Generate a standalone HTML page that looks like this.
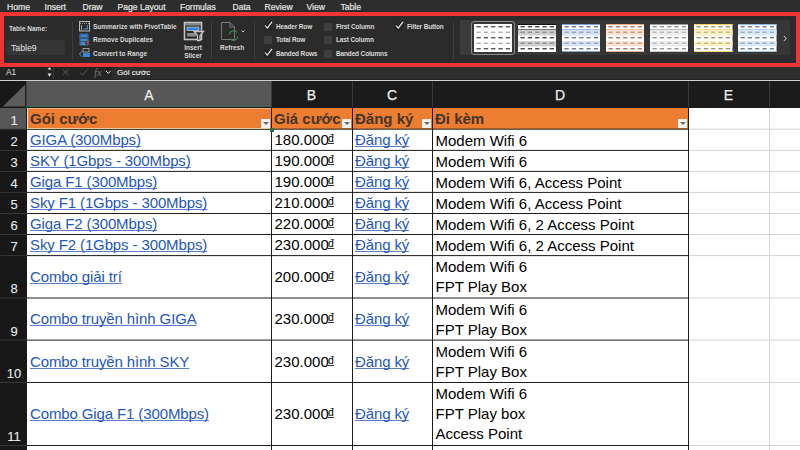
<!DOCTYPE html><html><head><meta charset="utf-8"><style>
*{margin:0;padding:0;box-sizing:border-box}
html,body{width:800px;height:450px;overflow:hidden;background:#fff;font-family:"Liberation Sans",sans-serif}
.ab{position:absolute}
.mt{position:absolute;top:1.8px;font-size:8.6px;line-height:10px;color:#e4e4e4;font-weight:normal;-webkit-text-stroke:0.2px #e4e4e4}
.rt{position:absolute;font-size:6.5px;color:#d8d8d8;font-weight:bold;white-space:nowrap;line-height:8px}
.cb{position:absolute;width:7.5px;height:7.5px;border-radius:1.5px;background:#3e3e3e}
.ck{position:absolute;font-size:10px;color:#f0f0f0;line-height:10px}
.th{position:absolute;width:39px;height:28px;background:#fff}
.cell{position:absolute;font-size:15px;white-space:nowrap;color:#000;line-height:17px}
.lk{letter-spacing:-0.12px;color:#2457b8;text-decoration:underline;text-decoration-thickness:1px;text-underline-offset:1px;text-decoration-skip-ink:none;text-decoration-color:#5a7ec4}
.hd{position:absolute;font-size:15px;font-weight:bold;color:#45342a;white-space:nowrap;line-height:17px}
.fb{position:absolute;width:9px;height:9px;background:#f2f2f2}
.fb:after{content:"";position:absolute;left:1.5px;top:3px;border-left:3px solid transparent;border-right:3px solid transparent;border-top:3.5px solid #6a6a6a}
.rh{position:absolute;left:0.5px;width:27px;font-size:13px;color:#ececec;text-align:center;line-height:13px;-webkit-text-stroke:0.08px #ececec}
.ch{position:absolute;top:82px;height:26px;font-size:14px;color:#ececec;text-align:center;line-height:27px;-webkit-text-stroke:0.25px #ececec}
</style></head><body>

<div class="ab" style="left:0;top:0;width:800px;height:12px;background:#2d2d2d"></div>
<div class="mt" style="left:7px">Home</div>
<div class="mt" style="left:44.5px">Insert</div>
<div class="mt" style="left:82.5px">Draw</div>
<div class="mt" style="left:117.5px">Page Layout</div>
<div class="mt" style="left:180px">Formulas</div>
<div class="mt" style="left:232.5px">Data</div>
<div class="mt" style="left:264.5px">Review</div>
<div class="mt" style="left:306.5px">View</div>
<div class="mt" style="left:340.5px">Table</div>
<div class="ab" style="left:0;top:12px;width:800px;height:55px;background:#f23434"></div>
<div class="ab" style="left:4px;top:16px;width:792px;height:46.6px;background:#2b2b2b"></div>
<div class="rt" style="left:9px;top:25px">Table Name:</div>
<div class="ab" style="left:6px;top:40px;width:59px;height:15px;background:#353535;border-radius:3px"></div>
<div class="rt" style="left:11px;top:43.5px;font-weight:normal;font-size:8.7px;color:#e6e6e6">Table9</div>
<div class="ab" style="left:72px;top:22px;width:1px;height:38px;background:#3d3d3d"></div>
<svg class="ab" style="left:78px;top:20px" width="13" height="40" viewBox="0 0 13 40"><rect x="1.5" y="1.5" width="10" height="9.5" fill="none" stroke="#b8b8b8" stroke-width="1"/><line x1="2" y1="3.5" x2="11" y2="3.5" stroke="#9a9a9a" stroke-width="1" stroke-dasharray="1,1"/><line x1="3.5" y1="5" x2="3.5" y2="10.5" stroke="#9a9a9a" stroke-width="1"/><path d="M5.5 9 H9.5 V5" fill="none" stroke="#4a90e2" stroke-width="1"/><rect x="2.5" y="14.5" width="7" height="3" fill="#3a84d8"/><rect x="2.5" y="18.5" width="7" height="3" fill="#3a84d8"/><rect x="2.5" y="22" width="5" height="3" fill="#3a84d8"/><rect x="2" y="14" width="8" height="11" fill="none" stroke="#5a9ae0" stroke-width="0.6"/><path d="M8 20.5 L11.5 24.5 M11.5 20.5 L8 24.5" stroke="#d9443a" stroke-width="0.9"/><rect x="5" y="28.5" width="6" height="3.5" fill="none" stroke="#a8a8a8" stroke-width="0.9"/><rect x="5" y="33" width="7" height="4" fill="#3a84d8"/><path d="M4 31 L1.5 34 L4 37" fill="none" stroke="#4a90e2" stroke-width="1"/></svg>
<div class="rt" style="left:93px;top:22.6px">Summarize with PivotTable</div>
<div class="rt" style="left:93px;top:36px">Remove Duplicates</div>
<div class="rt" style="left:93px;top:50px">Convert to Range</div>
<svg class="ab" style="left:183px;top:21px" width="22" height="21" viewBox="0 0 22 21"><rect x="1.5" y="1.5" width="17" height="17" fill="#2a2a2a" stroke="#c4c4c4" stroke-width="1.6"/><rect x="2" y="2" width="16" height="2.5" fill="#8a8a8a"/><rect x="4" y="6" width="12" height="3.5" fill="#3a84d8" stroke="#d8e6f5" stroke-width="0.6"/><rect x="4" y="12" width="9" height="3.5" fill="#8a8a8a"/><path d="M11 10.5 H20.5 L17 14.5 V19.5 H14.5 V14.5 Z" fill="#2a2a2a" stroke="#c4c4c4" stroke-width="1.3"/></svg>
<div class="rt" style="left:183px;top:44px;text-align:center;width:20px">Insert</div>
<div class="rt" style="left:182px;top:51.5px;text-align:center;width:22px">Slicer</div>
<div class="ab" style="left:211px;top:22px;width:1px;height:38px;background:#3d3d3d"></div>
<svg class="ab" style="left:220px;top:21px" width="28" height="22" viewBox="0 0 28 22"><path d="M1.5 1.5 H10 L14.5 6 V18.5 H1.5 Z" fill="none" stroke="#7a7a7a" stroke-width="1"/><path d="M10 1.5 V6 H14.5" fill="none" stroke="#7a7a7a" stroke-width="1"/><path d="M9.3 13.5 A4.3 4.3 0 0 1 17 11.5 M17.8 15.5 A4.3 4.3 0 0 1 10 17.5" fill="none" stroke="#428a4e" stroke-width="1.1"/><path d="M21.5 9.5 L23 11 L24.5 9.5" fill="none" stroke="#e0e0e0" stroke-width="0.9"/></svg>
<div class="rt" style="left:220px;top:44px">Refresh</div>
<div class="ab" style="left:254px;top:22px;width:1px;height:38px;background:#3d3d3d"></div>
<div class="cb" style="left:264px;top:23px;background:#252525"></div>
<svg class="ab" style="left:264px;top:21px" width="9" height="9" viewBox="0 0 9 9"><path d="M1 4.5 L3.3 7.2 L8 0.8" fill="none" stroke="#f2f2f2" stroke-width="1.1"/></svg>
<div class="rt" style="left:276px;top:23px;letter-spacing:-0.15px">Header Row</div>
<div class="cb" style="left:264px;top:36px"></div>
<div class="rt" style="left:276px;top:36px;letter-spacing:-0.15px">Total Row</div>
<div class="cb" style="left:264px;top:50px;background:#252525"></div>
<svg class="ab" style="left:264px;top:48px" width="9" height="9" viewBox="0 0 9 9"><path d="M1 4.5 L3.3 7.2 L8 0.8" fill="none" stroke="#f2f2f2" stroke-width="1.1"/></svg>
<div class="rt" style="left:276px;top:50px;letter-spacing:-0.15px">Banded Rows</div>
<div class="cb" style="left:324px;top:23px"></div>
<div class="rt" style="left:336px;top:23px;letter-spacing:-0.15px">First Column</div>
<div class="cb" style="left:324px;top:36px"></div>
<div class="rt" style="left:336px;top:36px;letter-spacing:-0.15px">Last Column</div>
<div class="cb" style="left:324px;top:50px"></div>
<div class="rt" style="left:336px;top:50px;letter-spacing:-0.15px">Banded Columns</div>
<div class="cb" style="left:395px;top:23px;background:#252525"></div>
<svg class="ab" style="left:395px;top:21px" width="9" height="9" viewBox="0 0 9 9"><path d="M1 4.5 L3.3 7.2 L8 0.8" fill="none" stroke="#f2f2f2" stroke-width="1.1"/></svg>
<div class="rt" style="left:407px;top:23px;letter-spacing:-0.15px">Filter Button</div>
<div class="ab" style="left:453px;top:22px;width:1px;height:38px;background:#3d3d3d"></div>
<div class="ab" style="left:460px;top:20px;width:330px;height:35px;background:#363636;border-radius:2px"></div>
<div class="ab" style="left:460px;top:20px;width:11px;height:35px;background:#3b3b3b;border-radius:2px 0 0 2px"></div>
<div class="ab" style="left:471px;top:21px;width:44px;height:34px;border:1.5px solid #8c8c8c;border-radius:3px"></div>
<svg class="ab" style="left:473.5px;top:23.5px" width="38.5" height="28" viewBox="0 0 38.5 28"><rect x="0" y="0" width="38.5" height="28" fill="#fff"/><rect x="2.5" y="2.1" width="4.3" height="1.3" fill="#4a4a4a"/><rect x="9.8" y="2.1" width="4.3" height="1.3" fill="#4a4a4a"/><rect x="17.1" y="2.1" width="4.3" height="1.3" fill="#4a4a4a"/><rect x="24.4" y="2.1" width="4.3" height="1.3" fill="#4a4a4a"/><rect x="31.7" y="2.1" width="4.3" height="1.3" fill="#4a4a4a"/><rect x="2.5" y="7.6" width="4.3" height="1.3" fill="#a8a8a8"/><rect x="9.8" y="7.6" width="4.3" height="1.3" fill="#a8a8a8"/><rect x="17.1" y="7.6" width="4.3" height="1.3" fill="#a8a8a8"/><rect x="24.4" y="7.6" width="4.3" height="1.3" fill="#a8a8a8"/><rect x="31.7" y="7.6" width="4.3" height="1.3" fill="#a8a8a8"/><rect x="2.5" y="13.1" width="4.3" height="1.3" fill="#4a4a4a"/><rect x="9.8" y="13.1" width="4.3" height="1.3" fill="#4a4a4a"/><rect x="17.1" y="13.1" width="4.3" height="1.3" fill="#4a4a4a"/><rect x="24.4" y="13.1" width="4.3" height="1.3" fill="#4a4a4a"/><rect x="31.7" y="13.1" width="4.3" height="1.3" fill="#4a4a4a"/><rect x="2.5" y="18.6" width="4.3" height="1.3" fill="#a8a8a8"/><rect x="9.8" y="18.6" width="4.3" height="1.3" fill="#a8a8a8"/><rect x="17.1" y="18.6" width="4.3" height="1.3" fill="#a8a8a8"/><rect x="24.4" y="18.6" width="4.3" height="1.3" fill="#a8a8a8"/><rect x="31.7" y="18.6" width="4.3" height="1.3" fill="#a8a8a8"/><rect x="2.5" y="24.1" width="4.3" height="1.3" fill="#4a4a4a"/><rect x="9.8" y="24.1" width="4.3" height="1.3" fill="#4a4a4a"/><rect x="17.1" y="24.1" width="4.3" height="1.3" fill="#4a4a4a"/><rect x="24.4" y="24.1" width="4.3" height="1.3" fill="#4a4a4a"/><rect x="31.7" y="24.1" width="4.3" height="1.3" fill="#4a4a4a"/></svg>
<svg class="ab" style="left:517.6px;top:23.5px" width="38.5" height="28" viewBox="0 0 38.5 28"><rect x="0" y="0" width="38.5" height="28" fill="#fff"/><rect x="0" y="0" width="38.5" height="1" fill="#111"/><rect x="0" y="5.3" width="38.5" height="0.8" fill="#333"/><rect x="0" y="6" width="38.5" height="5.5" fill="#cfcfcf"/><rect x="0" y="17" width="38.5" height="5.5" fill="#cfcfcf"/><rect x="0" y="27" width="38.5" height="1" fill="#fff"/><rect x="2.5" y="2.1" width="4.3" height="1.3" fill="#3a3a3a"/><rect x="9.8" y="2.1" width="4.3" height="1.3" fill="#3a3a3a"/><rect x="17.1" y="2.1" width="4.3" height="1.3" fill="#3a3a3a"/><rect x="24.4" y="2.1" width="4.3" height="1.3" fill="#3a3a3a"/><rect x="31.7" y="2.1" width="4.3" height="1.3" fill="#3a3a3a"/><rect x="2.5" y="7.6" width="4.3" height="1.3" fill="#8a8a8a"/><rect x="9.8" y="7.6" width="4.3" height="1.3" fill="#8a8a8a"/><rect x="17.1" y="7.6" width="4.3" height="1.3" fill="#8a8a8a"/><rect x="24.4" y="7.6" width="4.3" height="1.3" fill="#8a8a8a"/><rect x="31.7" y="7.6" width="4.3" height="1.3" fill="#8a8a8a"/><rect x="2.5" y="13.1" width="4.3" height="1.3" fill="#3a3a3a"/><rect x="9.8" y="13.1" width="4.3" height="1.3" fill="#3a3a3a"/><rect x="17.1" y="13.1" width="4.3" height="1.3" fill="#3a3a3a"/><rect x="24.4" y="13.1" width="4.3" height="1.3" fill="#3a3a3a"/><rect x="31.7" y="13.1" width="4.3" height="1.3" fill="#3a3a3a"/><rect x="2.5" y="18.6" width="4.3" height="1.3" fill="#8a8a8a"/><rect x="9.8" y="18.6" width="4.3" height="1.3" fill="#8a8a8a"/><rect x="17.1" y="18.6" width="4.3" height="1.3" fill="#8a8a8a"/><rect x="24.4" y="18.6" width="4.3" height="1.3" fill="#8a8a8a"/><rect x="31.7" y="18.6" width="4.3" height="1.3" fill="#8a8a8a"/><rect x="2.5" y="24.1" width="4.3" height="1.3" fill="#3a3a3a"/><rect x="9.8" y="24.1" width="4.3" height="1.3" fill="#3a3a3a"/><rect x="17.1" y="24.1" width="4.3" height="1.3" fill="#3a3a3a"/><rect x="24.4" y="24.1" width="4.3" height="1.3" fill="#3a3a3a"/><rect x="31.7" y="24.1" width="4.3" height="1.3" fill="#3a3a3a"/></svg>
<svg class="ab" style="left:561.7px;top:23.5px" width="38.5" height="28" viewBox="0 0 38.5 28"><rect x="0" y="0" width="38.5" height="28" fill="#fff"/><rect x="0" y="0" width="38.5" height="1" fill="#7d9fd6"/><rect x="0" y="5.3" width="38.5" height="0.8" fill="#7d9fd6"/><rect x="0" y="6" width="38.5" height="5.5" fill="#d9e2f3"/><rect x="0" y="17" width="38.5" height="5.5" fill="#d9e2f3"/><rect x="0" y="27" width="38.5" height="1" fill="#8aa4d0"/><rect x="2.5" y="2.1" width="4.3" height="1.3" fill="#5b6f8c"/><rect x="9.8" y="2.1" width="4.3" height="1.3" fill="#5b6f8c"/><rect x="17.1" y="2.1" width="4.3" height="1.3" fill="#5b6f8c"/><rect x="24.4" y="2.1" width="4.3" height="1.3" fill="#5b6f8c"/><rect x="31.7" y="2.1" width="4.3" height="1.3" fill="#5b6f8c"/><rect x="2.5" y="7.6" width="4.3" height="1.3" fill="#8ea0bd"/><rect x="9.8" y="7.6" width="4.3" height="1.3" fill="#8ea0bd"/><rect x="17.1" y="7.6" width="4.3" height="1.3" fill="#8ea0bd"/><rect x="24.4" y="7.6" width="4.3" height="1.3" fill="#8ea0bd"/><rect x="31.7" y="7.6" width="4.3" height="1.3" fill="#8ea0bd"/><rect x="2.5" y="13.1" width="4.3" height="1.3" fill="#5b6f8c"/><rect x="9.8" y="13.1" width="4.3" height="1.3" fill="#5b6f8c"/><rect x="17.1" y="13.1" width="4.3" height="1.3" fill="#5b6f8c"/><rect x="24.4" y="13.1" width="4.3" height="1.3" fill="#5b6f8c"/><rect x="31.7" y="13.1" width="4.3" height="1.3" fill="#5b6f8c"/><rect x="2.5" y="18.6" width="4.3" height="1.3" fill="#8ea0bd"/><rect x="9.8" y="18.6" width="4.3" height="1.3" fill="#8ea0bd"/><rect x="17.1" y="18.6" width="4.3" height="1.3" fill="#8ea0bd"/><rect x="24.4" y="18.6" width="4.3" height="1.3" fill="#8ea0bd"/><rect x="31.7" y="18.6" width="4.3" height="1.3" fill="#8ea0bd"/><rect x="2.5" y="24.1" width="4.3" height="1.3" fill="#5b6f8c"/><rect x="9.8" y="24.1" width="4.3" height="1.3" fill="#5b6f8c"/><rect x="17.1" y="24.1" width="4.3" height="1.3" fill="#5b6f8c"/><rect x="24.4" y="24.1" width="4.3" height="1.3" fill="#5b6f8c"/><rect x="31.7" y="24.1" width="4.3" height="1.3" fill="#5b6f8c"/></svg>
<svg class="ab" style="left:605.8px;top:23.5px" width="38.5" height="28" viewBox="0 0 38.5 28"><rect x="0" y="0" width="38.5" height="28" fill="#fff"/><rect x="0" y="0" width="38.5" height="1" fill="#f3a978"/><rect x="0" y="5.3" width="38.5" height="0.8" fill="#f3a978"/><rect x="0" y="6" width="38.5" height="5.5" fill="#fbe2d3"/><rect x="0" y="17" width="38.5" height="5.5" fill="#fbe2d3"/><rect x="0" y="27" width="38.5" height="1" fill="#f3b48c"/><rect x="2.5" y="2.1" width="4.3" height="1.3" fill="#9a7058"/><rect x="9.8" y="2.1" width="4.3" height="1.3" fill="#9a7058"/><rect x="17.1" y="2.1" width="4.3" height="1.3" fill="#9a7058"/><rect x="24.4" y="2.1" width="4.3" height="1.3" fill="#9a7058"/><rect x="31.7" y="2.1" width="4.3" height="1.3" fill="#9a7058"/><rect x="2.5" y="7.6" width="4.3" height="1.3" fill="#c4967a"/><rect x="9.8" y="7.6" width="4.3" height="1.3" fill="#c4967a"/><rect x="17.1" y="7.6" width="4.3" height="1.3" fill="#c4967a"/><rect x="24.4" y="7.6" width="4.3" height="1.3" fill="#c4967a"/><rect x="31.7" y="7.6" width="4.3" height="1.3" fill="#c4967a"/><rect x="2.5" y="13.1" width="4.3" height="1.3" fill="#9a7058"/><rect x="9.8" y="13.1" width="4.3" height="1.3" fill="#9a7058"/><rect x="17.1" y="13.1" width="4.3" height="1.3" fill="#9a7058"/><rect x="24.4" y="13.1" width="4.3" height="1.3" fill="#9a7058"/><rect x="31.7" y="13.1" width="4.3" height="1.3" fill="#9a7058"/><rect x="2.5" y="18.6" width="4.3" height="1.3" fill="#c4967a"/><rect x="9.8" y="18.6" width="4.3" height="1.3" fill="#c4967a"/><rect x="17.1" y="18.6" width="4.3" height="1.3" fill="#c4967a"/><rect x="24.4" y="18.6" width="4.3" height="1.3" fill="#c4967a"/><rect x="31.7" y="18.6" width="4.3" height="1.3" fill="#c4967a"/><rect x="2.5" y="24.1" width="4.3" height="1.3" fill="#9a7058"/><rect x="9.8" y="24.1" width="4.3" height="1.3" fill="#9a7058"/><rect x="17.1" y="24.1" width="4.3" height="1.3" fill="#9a7058"/><rect x="24.4" y="24.1" width="4.3" height="1.3" fill="#9a7058"/><rect x="31.7" y="24.1" width="4.3" height="1.3" fill="#9a7058"/></svg>
<svg class="ab" style="left:649.9px;top:23.5px" width="38.5" height="28" viewBox="0 0 38.5 28"><rect x="0" y="0" width="38.5" height="28" fill="#fff"/><rect x="0" y="0" width="38.5" height="1" fill="#9a9a9a"/><rect x="0" y="5.3" width="38.5" height="0.8" fill="#9a9a9a"/><rect x="0" y="6" width="38.5" height="5.5" fill="#ececec"/><rect x="0" y="17" width="38.5" height="5.5" fill="#ececec"/><rect x="0" y="27" width="38.5" height="1" fill="#c8c8c8"/><rect x="2.5" y="2.1" width="4.3" height="1.3" fill="#8a8a8a"/><rect x="9.8" y="2.1" width="4.3" height="1.3" fill="#8a8a8a"/><rect x="17.1" y="2.1" width="4.3" height="1.3" fill="#8a8a8a"/><rect x="24.4" y="2.1" width="4.3" height="1.3" fill="#8a8a8a"/><rect x="31.7" y="2.1" width="4.3" height="1.3" fill="#8a8a8a"/><rect x="2.5" y="7.6" width="4.3" height="1.3" fill="#b5b5b5"/><rect x="9.8" y="7.6" width="4.3" height="1.3" fill="#b5b5b5"/><rect x="17.1" y="7.6" width="4.3" height="1.3" fill="#b5b5b5"/><rect x="24.4" y="7.6" width="4.3" height="1.3" fill="#b5b5b5"/><rect x="31.7" y="7.6" width="4.3" height="1.3" fill="#b5b5b5"/><rect x="2.5" y="13.1" width="4.3" height="1.3" fill="#8a8a8a"/><rect x="9.8" y="13.1" width="4.3" height="1.3" fill="#8a8a8a"/><rect x="17.1" y="13.1" width="4.3" height="1.3" fill="#8a8a8a"/><rect x="24.4" y="13.1" width="4.3" height="1.3" fill="#8a8a8a"/><rect x="31.7" y="13.1" width="4.3" height="1.3" fill="#8a8a8a"/><rect x="2.5" y="18.6" width="4.3" height="1.3" fill="#b5b5b5"/><rect x="9.8" y="18.6" width="4.3" height="1.3" fill="#b5b5b5"/><rect x="17.1" y="18.6" width="4.3" height="1.3" fill="#b5b5b5"/><rect x="24.4" y="18.6" width="4.3" height="1.3" fill="#b5b5b5"/><rect x="31.7" y="18.6" width="4.3" height="1.3" fill="#b5b5b5"/><rect x="2.5" y="24.1" width="4.3" height="1.3" fill="#8a8a8a"/><rect x="9.8" y="24.1" width="4.3" height="1.3" fill="#8a8a8a"/><rect x="17.1" y="24.1" width="4.3" height="1.3" fill="#8a8a8a"/><rect x="24.4" y="24.1" width="4.3" height="1.3" fill="#8a8a8a"/><rect x="31.7" y="24.1" width="4.3" height="1.3" fill="#8a8a8a"/></svg>
<svg class="ab" style="left:694.0px;top:23.5px" width="38.5" height="28" viewBox="0 0 38.5 28"><rect x="0" y="0" width="38.5" height="28" fill="#fff"/><rect x="0" y="0" width="38.5" height="1" fill="#f5cd5e"/><rect x="0" y="5.3" width="38.5" height="0.8" fill="#f5cd5e"/><rect x="0" y="6" width="38.5" height="5.5" fill="#fff1c8"/><rect x="0" y="17" width="38.5" height="5.5" fill="#fff1c8"/><rect x="0" y="27" width="38.5" height="1" fill="#f5d67a"/><rect x="2.5" y="2.1" width="4.3" height="1.3" fill="#a08a5a"/><rect x="9.8" y="2.1" width="4.3" height="1.3" fill="#a08a5a"/><rect x="17.1" y="2.1" width="4.3" height="1.3" fill="#a08a5a"/><rect x="24.4" y="2.1" width="4.3" height="1.3" fill="#a08a5a"/><rect x="31.7" y="2.1" width="4.3" height="1.3" fill="#a08a5a"/><rect x="2.5" y="7.6" width="4.3" height="1.3" fill="#c8b27a"/><rect x="9.8" y="7.6" width="4.3" height="1.3" fill="#c8b27a"/><rect x="17.1" y="7.6" width="4.3" height="1.3" fill="#c8b27a"/><rect x="24.4" y="7.6" width="4.3" height="1.3" fill="#c8b27a"/><rect x="31.7" y="7.6" width="4.3" height="1.3" fill="#c8b27a"/><rect x="2.5" y="13.1" width="4.3" height="1.3" fill="#a08a5a"/><rect x="9.8" y="13.1" width="4.3" height="1.3" fill="#a08a5a"/><rect x="17.1" y="13.1" width="4.3" height="1.3" fill="#a08a5a"/><rect x="24.4" y="13.1" width="4.3" height="1.3" fill="#a08a5a"/><rect x="31.7" y="13.1" width="4.3" height="1.3" fill="#a08a5a"/><rect x="2.5" y="18.6" width="4.3" height="1.3" fill="#c8b27a"/><rect x="9.8" y="18.6" width="4.3" height="1.3" fill="#c8b27a"/><rect x="17.1" y="18.6" width="4.3" height="1.3" fill="#c8b27a"/><rect x="24.4" y="18.6" width="4.3" height="1.3" fill="#c8b27a"/><rect x="31.7" y="18.6" width="4.3" height="1.3" fill="#c8b27a"/><rect x="2.5" y="24.1" width="4.3" height="1.3" fill="#a08a5a"/><rect x="9.8" y="24.1" width="4.3" height="1.3" fill="#a08a5a"/><rect x="17.1" y="24.1" width="4.3" height="1.3" fill="#a08a5a"/><rect x="24.4" y="24.1" width="4.3" height="1.3" fill="#a08a5a"/><rect x="31.7" y="24.1" width="4.3" height="1.3" fill="#a08a5a"/></svg>
<svg class="ab" style="left:738.1px;top:23.5px" width="38.5" height="28" viewBox="0 0 38.5 28"><rect x="0" y="0" width="38.5" height="28" fill="#fff"/><rect x="0" y="0" width="38.5" height="1" fill="#8fb8e0"/><rect x="0" y="5.3" width="38.5" height="0.8" fill="#8fb8e0"/><rect x="0" y="6" width="38.5" height="5.5" fill="#dbe9f6"/><rect x="0" y="17" width="38.5" height="5.5" fill="#dbe9f6"/><rect x="0" y="27" width="38.5" height="1" fill="#a5c5e5"/><rect x="2.5" y="2.1" width="4.3" height="1.3" fill="#5a7590"/><rect x="9.8" y="2.1" width="4.3" height="1.3" fill="#5a7590"/><rect x="17.1" y="2.1" width="4.3" height="1.3" fill="#5a7590"/><rect x="24.4" y="2.1" width="4.3" height="1.3" fill="#5a7590"/><rect x="31.7" y="2.1" width="4.3" height="1.3" fill="#5a7590"/><rect x="2.5" y="7.6" width="4.3" height="1.3" fill="#90a8c0"/><rect x="9.8" y="7.6" width="4.3" height="1.3" fill="#90a8c0"/><rect x="17.1" y="7.6" width="4.3" height="1.3" fill="#90a8c0"/><rect x="24.4" y="7.6" width="4.3" height="1.3" fill="#90a8c0"/><rect x="31.7" y="7.6" width="4.3" height="1.3" fill="#90a8c0"/><rect x="2.5" y="13.1" width="4.3" height="1.3" fill="#5a7590"/><rect x="9.8" y="13.1" width="4.3" height="1.3" fill="#5a7590"/><rect x="17.1" y="13.1" width="4.3" height="1.3" fill="#5a7590"/><rect x="24.4" y="13.1" width="4.3" height="1.3" fill="#5a7590"/><rect x="31.7" y="13.1" width="4.3" height="1.3" fill="#5a7590"/><rect x="2.5" y="18.6" width="4.3" height="1.3" fill="#90a8c0"/><rect x="9.8" y="18.6" width="4.3" height="1.3" fill="#90a8c0"/><rect x="17.1" y="18.6" width="4.3" height="1.3" fill="#90a8c0"/><rect x="24.4" y="18.6" width="4.3" height="1.3" fill="#90a8c0"/><rect x="31.7" y="18.6" width="4.3" height="1.3" fill="#90a8c0"/><rect x="2.5" y="24.1" width="4.3" height="1.3" fill="#5a7590"/><rect x="9.8" y="24.1" width="4.3" height="1.3" fill="#5a7590"/><rect x="17.1" y="24.1" width="4.3" height="1.3" fill="#5a7590"/><rect x="24.4" y="24.1" width="4.3" height="1.3" fill="#5a7590"/><rect x="31.7" y="24.1" width="4.3" height="1.3" fill="#5a7590"/></svg>
<svg class="ab" style="left:782px;top:35px" width="6" height="7" viewBox="0 0 6 7"><path d="M1.8 1 L4.2 3.5 L1.8 6" fill="none" stroke="#e0e0e0" stroke-width="1"/></svg>
<div class="ab" style="left:0;top:67.4px;width:800px;height:13px;background:#232323"></div>
<div class="ab" style="left:112px;top:67.4px;width:688px;height:12px;background:#2e2e2e"></div>
<div class="ab" style="left:0;top:79.5px;width:800px;height:1.6px;background:#cfcfcf"></div>
<div class="rt" style="left:6px;top:68px;font-weight:normal;font-size:8.4px;line-height:9px;color:#e0e0e0">A1</div>
<div class="rt" style="left:117px;top:68px;font-weight:normal;font-size:8px;line-height:9.5px;color:#ececec;-webkit-text-stroke:0.15px #ececec">Gói cước</div>
<div class="ab" style="left:53px;top:67px;width:1px;height:12px;background:#3a3a3a"></div>
<svg class="ab" style="left:46px;top:67px" width="7" height="12" viewBox="0 0 7 12"><path d="M1.5 2.5 L3.5 0.3 L5.5 2.5 Z" fill="#e8e8e8"/><path d="M1.5 6.5 H5.5 L3.5 9.8 Z" fill="#e8e8e8"/></svg>
<svg class="ab" style="left:61px;top:68px" width="30" height="10" viewBox="0 0 30 10"><path d="M1.8 1.5 L7.5 7 M7.5 1.5 L1.8 7" stroke="#5c5c5c" stroke-width="1"/><path d="M19 4.5 L21.5 7 L26.5 1.5" fill="none" stroke="#5c5c5c" stroke-width="1"/></svg>
<div class="ab" style="left:94px;top:66px;font-family:'Liberation Serif',serif;font-style:italic;font-size:11px;line-height:12px;color:#7a7a7a">fx</div>
<svg class="ab" style="left:105px;top:70px" width="7" height="5" viewBox="0 0 7 5"><path d="M1 1 L3.3 3.3 L5.6 1" fill="none" stroke="#e8e8e8" stroke-width="1"/></svg>
<div class="ab" style="left:0;top:81px;width:800px;height:27px;background:#1b1b1b"></div>
<div class="ab" style="left:27px;top:81px;width:244px;height:25px;background:#575757"></div>
<div class="ab" style="left:0;top:81px;width:27px;height:27px;background:#181818"></div>
<svg class="ab" style="left:0;top:81px" width="26" height="26"><polygon points="2.8,25.6 25.2,25.6 25.2,3.4" fill="#5c5c5c"/></svg>
<div class="ch" style="left:27px;width:244px">A</div>
<div class="ab" style="left:271px;top:81px;width:1px;height:26px;background:#3a3a3a"></div>
<div class="ch" style="left:271px;width:81px">B</div>
<div class="ab" style="left:352px;top:81px;width:1px;height:26px;background:#3a3a3a"></div>
<div class="ch" style="left:352px;width:80px">C</div>
<div class="ab" style="left:432px;top:81px;width:1px;height:26px;background:#3a3a3a"></div>
<div class="ch" style="left:432px;width:256px">D</div>
<div class="ab" style="left:688px;top:81px;width:1px;height:26px;background:#3a3a3a"></div>
<div class="ch" style="left:688px;width:81px">E</div>
<div class="ab" style="left:769px;top:81px;width:1px;height:26px;background:#3a3a3a"></div>
<div class="ab" style="left:0;top:108px;width:27px;height:342px;background:#181818"></div>
<div class="ab" style="left:0;top:108px;width:26px;height:21px;background:#575757"></div>
<div class="rh" style="top:114px">1</div>
<div class="rh" style="top:135px">2</div>
<div class="rh" style="top:156px">3</div>
<div class="rh" style="top:177px">4</div>
<div class="rh" style="top:198px">5</div>
<div class="rh" style="top:219px">6</div>
<div class="rh" style="top:240px">7</div>
<div class="rh" style="top:282px">8</div>
<div class="rh" style="top:325px">9</div>
<div class="rh" style="top:367px">10</div>
<div class="rh" style="top:430px">11</div>
<div class="rh" style="top:454px">12</div>
<div class="ab" style="left:27px;top:108px;width:773px;height:342px;background:#fff"></div>
<div class="ab" style="left:27px;top:108px;width:661px;height:21px;background:#ec7d31"></div>
<svg class="ab" style="left:0;top:0" width="800" height="450" viewBox="0 0 800 450"><rect x="0" y="128.70" width="27" height="1" fill="#383838"/><rect x="0" y="149.90" width="27" height="1" fill="#383838"/><rect x="0" y="170.90" width="27" height="1" fill="#383838"/><rect x="0" y="191.90" width="27" height="1" fill="#383838"/><rect x="0" y="213.00" width="27" height="1" fill="#383838"/><rect x="0" y="234.00" width="27" height="1" fill="#383838"/><rect x="0" y="255.10" width="27" height="1" fill="#383838"/><rect x="0" y="297.50" width="27" height="1" fill="#383838"/><rect x="0" y="339.60" width="27" height="1" fill="#383838"/><rect x="0" y="382.00" width="27" height="1" fill="#383838"/><rect x="0" y="445.00" width="27" height="1" fill="#383838"/><rect x="0" y="469.50" width="27" height="1" fill="#383838"/><rect x="689" y="128.70" width="111" height="1" fill="#d4d4d4"/><rect x="689" y="149.90" width="111" height="1" fill="#d4d4d4"/><rect x="689" y="170.90" width="111" height="1" fill="#d4d4d4"/><rect x="689" y="191.90" width="111" height="1" fill="#d4d4d4"/><rect x="689" y="213.00" width="111" height="1" fill="#d4d4d4"/><rect x="689" y="234.00" width="111" height="1" fill="#d4d4d4"/><rect x="689" y="255.10" width="111" height="1" fill="#d4d4d4"/><rect x="689" y="297.50" width="111" height="1" fill="#d4d4d4"/><rect x="689" y="339.60" width="111" height="1" fill="#d4d4d4"/><rect x="689" y="382.00" width="111" height="1" fill="#d4d4d4"/><rect x="689" y="445.00" width="111" height="1" fill="#d4d4d4"/><rect x="769" y="108" width="1" height="342" fill="#d8d8d8"/><rect x="27" y="128.70" width="662" height="1" fill="#1c1c1c"/><rect x="27" y="149.90" width="662" height="1" fill="#1c1c1c"/><rect x="27" y="170.90" width="662" height="1" fill="#1c1c1c"/><rect x="27" y="191.90" width="662" height="1" fill="#1c1c1c"/><rect x="27" y="213.00" width="662" height="1" fill="#1c1c1c"/><rect x="27" y="234.00" width="662" height="1" fill="#1c1c1c"/><rect x="27" y="255.10" width="662" height="1" fill="#1c1c1c"/><rect x="27" y="297.50" width="662" height="1" fill="#1c1c1c"/><rect x="27" y="339.60" width="662" height="1" fill="#1c1c1c"/><rect x="27" y="382.00" width="662" height="1" fill="#1c1c1c"/><rect x="27" y="445.00" width="662" height="1" fill="#1c1c1c"/><rect x="271.0" y="108" width="1" height="342" fill="#1c1c1c"/><rect x="352.0" y="108" width="1" height="342" fill="#1c1c1c"/><rect x="432.0" y="108" width="1" height="342" fill="#1c1c1c"/><rect x="688.0" y="108" width="1" height="342" fill="#1c1c1c"/></svg>
<div class="hd" style="left:30px;top:110px">Gói cước</div>
<div class="fb" style="left:261px;top:118.5px"></div>
<div class="hd" style="left:274px;top:110px">Giá cước</div>
<div class="fb" style="left:342px;top:118.5px"></div>
<div class="hd" style="left:355px;top:110px">Đăng ký</div>
<div class="fb" style="left:422px;top:118.5px"></div>
<div class="hd" style="left:435px;top:110px">Đi kèm</div>
<div class="fb" style="left:678px;top:118.5px"></div>
<div class="cell lk" style="left:30px;top:131px">GIGA (300Mbps)</div>
<div class="cell" style="left:274.5px;top:131px">180.000<span style="position:absolute;left:53.6px;top:2.1px;font-size:10.5px;line-height:10px;width:6px">đ<span style="position:absolute;left:0;top:9.6px;width:6px;height:1px;background:#333"></span></span></div>
<div class="cell lk" style="left:355px;top:131px">Đăng ký</div>
<div class="cell" style="left:435.5px;top:131px;line-height:20.2px">Modem Wifi 6</div>
<div class="cell lk" style="left:30px;top:152px">SKY (1Gbps - 300Mbps)</div>
<div class="cell" style="left:274.5px;top:152px">190.000<span style="position:absolute;left:53.6px;top:2.1px;font-size:10.5px;line-height:10px;width:6px">đ<span style="position:absolute;left:0;top:9.6px;width:6px;height:1px;background:#333"></span></span></div>
<div class="cell lk" style="left:355px;top:152px">Đăng ký</div>
<div class="cell" style="left:435.5px;top:152px;line-height:20.2px">Modem Wifi 6</div>
<div class="cell lk" style="left:30px;top:173px">Giga F1 (300Mbps)</div>
<div class="cell" style="left:274.5px;top:173px">190.000<span style="position:absolute;left:53.6px;top:2.1px;font-size:10.5px;line-height:10px;width:6px">đ<span style="position:absolute;left:0;top:9.6px;width:6px;height:1px;background:#333"></span></span></div>
<div class="cell lk" style="left:355px;top:173px">Đăng ký</div>
<div class="cell" style="left:435.5px;top:173px;line-height:20.2px">Modem Wifi 6, Access Point</div>
<div class="cell lk" style="left:30px;top:194px">Sky F1 (1Gbps - 300Mbps)</div>
<div class="cell" style="left:274.5px;top:194px">210.000<span style="position:absolute;left:53.6px;top:2.1px;font-size:10.5px;line-height:10px;width:6px">đ<span style="position:absolute;left:0;top:9.6px;width:6px;height:1px;background:#333"></span></span></div>
<div class="cell lk" style="left:355px;top:194px">Đăng ký</div>
<div class="cell" style="left:435.5px;top:194px;line-height:20.2px">Modem Wifi 6, Access Point</div>
<div class="cell lk" style="left:30px;top:215px">Giga F2 (300Mbps)</div>
<div class="cell" style="left:274.5px;top:215px">220.000<span style="position:absolute;left:53.6px;top:2.1px;font-size:10.5px;line-height:10px;width:6px">đ<span style="position:absolute;left:0;top:9.6px;width:6px;height:1px;background:#333"></span></span></div>
<div class="cell lk" style="left:355px;top:215px">Đăng ký</div>
<div class="cell" style="left:435.5px;top:215px;line-height:20.2px">Modem Wifi 6, 2 Access Point</div>
<div class="cell lk" style="left:30px;top:236px">Sky F2 (1Gbps - 300Mbps)</div>
<div class="cell" style="left:274.5px;top:236px">230.000<span style="position:absolute;left:53.6px;top:2.1px;font-size:10.5px;line-height:10px;width:6px">đ<span style="position:absolute;left:0;top:9.6px;width:6px;height:1px;background:#333"></span></span></div>
<div class="cell lk" style="left:355px;top:236px">Đăng ký</div>
<div class="cell" style="left:435.5px;top:236px;line-height:20.2px">Modem Wifi 6, 2 Access Point</div>
<div class="cell lk" style="left:30px;top:268px">Combo giải trí</div>
<div class="cell" style="left:274.5px;top:268px">200.000<span style="position:absolute;left:53.6px;top:2.1px;font-size:10.5px;line-height:10px;width:6px">đ<span style="position:absolute;left:0;top:9.6px;width:6px;height:1px;background:#333"></span></span></div>
<div class="cell lk" style="left:355px;top:268px">Đăng ký</div>
<div class="cell" style="left:435.5px;top:257px;line-height:20.2px">Modem Wifi 6<br>FPT Play Box</div>
<div class="cell lk" style="left:30px;top:310px">Combo truyền hình GIGA</div>
<div class="cell" style="left:274.5px;top:310px">230.000<span style="position:absolute;left:53.6px;top:2.1px;font-size:10.5px;line-height:10px;width:6px">đ<span style="position:absolute;left:0;top:9.6px;width:6px;height:1px;background:#333"></span></span></div>
<div class="cell lk" style="left:355px;top:310px">Đăng ký</div>
<div class="cell" style="left:435.5px;top:300px;line-height:20.2px">Modem Wifi 6<br>FPT Play Box</div>
<div class="cell lk" style="left:30px;top:353px">Combo truyền hình SKY</div>
<div class="cell" style="left:274.5px;top:353px">230.000<span style="position:absolute;left:53.6px;top:2.1px;font-size:10.5px;line-height:10px;width:6px">đ<span style="position:absolute;left:0;top:9.6px;width:6px;height:1px;background:#333"></span></span></div>
<div class="cell lk" style="left:355px;top:353px">Đăng ký</div>
<div class="cell" style="left:435.5px;top:342px;line-height:20.2px">Modem Wifi 6<br>FPT Play Box</div>
<div class="cell lk" style="left:30px;top:405px">Combo Giga F1 (300Mbps)</div>
<div class="cell" style="left:274.5px;top:405px">230.000<span style="position:absolute;left:53.6px;top:2.1px;font-size:10.5px;line-height:10px;width:6px">đ<span style="position:absolute;left:0;top:9.6px;width:6px;height:1px;background:#333"></span></span></div>
<div class="cell lk" style="left:355px;top:405px">Đăng ký</div>
<div class="cell" style="left:435.5px;top:384px;line-height:20.2px">Modem Wifi 6<br>FPT Play box<br>Access Point</div>
<div class="ab" style="left:27px;top:106.2px;width:245px;height:1.3px;background:#3d6650"></div>
<div class="ab" style="left:26px;top:81px;width:1px;height:27px;background:#404040"></div>
<div class="ab" style="left:27px;top:108px;width:244px;height:1px;background:#f2b27e"></div>
<div class="ab" style="left:27px;top:108px;width:1px;height:21px;background:#dfe9da"></div>
<div class="ab" style="left:28px;top:128px;width:243px;height:1px;background:#f0c49c"></div>
<div class="ab" style="left:27px;top:129px;width:244px;height:1px;background:#2c4a36"></div>
<div class="ab" style="left:269.5px;top:127.5px;width:4px;height:4px;background:#2f7048"></div>
</body></html>
